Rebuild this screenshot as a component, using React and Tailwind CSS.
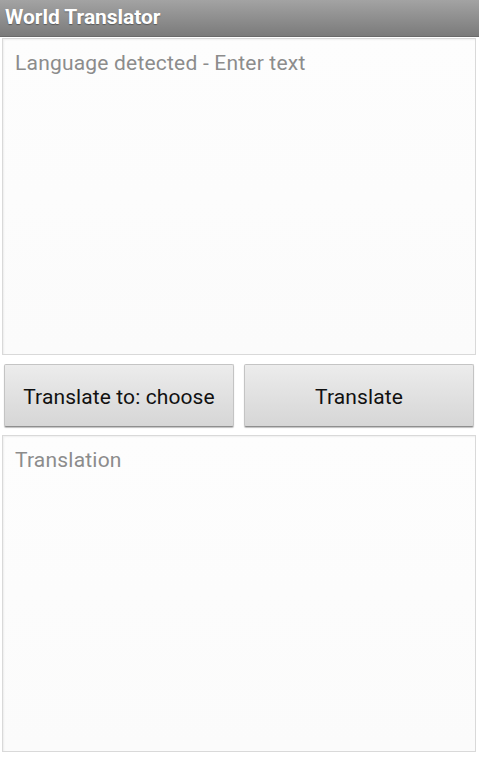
export default function App() {
  return (
    <div className="w-[479px] h-[760px] bg-white flex flex-col" style={{ fontFamily: 'Roboto, "Liberation Sans", sans-serif' }}>
      <div className="h-[37px] shrink-0 bg-gradient-to-b from-[#a3a3a3] to-[#7b7b7b] border-b border-[#6a6a6a] flex items-center px-[5px]">
        <span className="text-white font-bold text-[21px] tracking-[-0.05px] [text-shadow:0_1px_1px_rgba(0,0,0,0.35)]">World Translator</span>
      </div>
      <div className="px-[2px] pt-[1px] flex flex-col">
        <textarea
          className="h-[317px] w-[474px] resize-none border border-[#d9d9d9] bg-gradient-to-b from-[#fdfdfd] to-[#fbfbfb] px-[12px] pt-[9px] text-[21px] tracking-[0.2px] text-[#333] placeholder-[#8c8c8c] outline-none shadow-[inset_1px_1px_2px_rgba(0,0,0,0.06)]"
          placeholder="Language detected - Enter text"
        />
        <div className="flex gap-[10px] px-[2px] mt-[9px]">
          <button className="w-[230px] h-[63px] pt-[4px] rounded-[2px] bg-gradient-to-b from-[#ececec] to-[#d6d6d6] border border-[#c4c4c4] border-b-[#8e8e8e] text-[21px] tracking-[0.1px] text-[#111] shadow-[0_1px_1px_rgba(0,0,0,0.25)]">
            Translate to: choose
          </button>
          <button className="w-[230px] h-[63px] pt-[4px] rounded-[2px] bg-gradient-to-b from-[#ececec] to-[#d6d6d6] border border-[#c4c4c4] border-b-[#8e8e8e] text-[21px] tracking-[0.1px] text-[#111] shadow-[0_1px_1px_rgba(0,0,0,0.25)]">
            Translate
          </button>
        </div>
        <textarea
          className="mt-[8px] h-[317px] w-[474px] resize-none border border-[#d9d9d9] bg-gradient-to-b from-[#fdfdfd] to-[#fbfbfb] px-[12px] pt-[9px] text-[21px] tracking-[0.2px] text-[#333] placeholder-[#8c8c8c] outline-none shadow-[inset_1px_1px_2px_rgba(0,0,0,0.06)]"
          placeholder="Translation"
        />
      </div>
    </div>
  )
}
